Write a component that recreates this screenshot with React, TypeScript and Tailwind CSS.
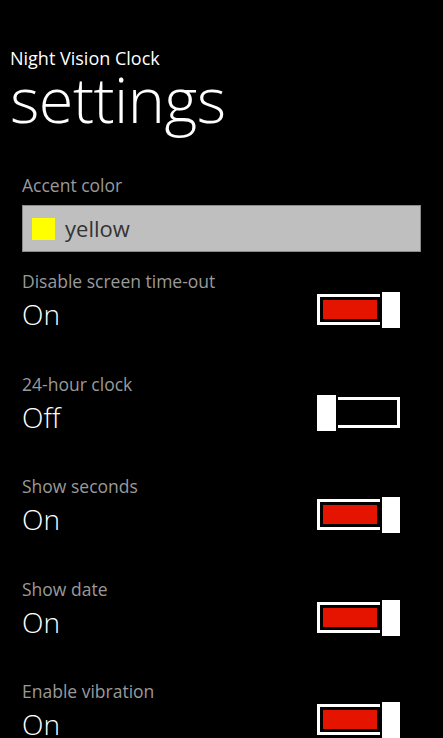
const font = { fontFamily: '"Open Sans", "Noto Sans", sans-serif' };

type Setting = { label: string; on: boolean };

const settings: Setting[] = [
  { label: "Disable screen time-out", on: true },
  { label: "24-hour clock", on: false },
  { label: "Show seconds", on: true },
  { label: "Show date", on: true },
  { label: "Enable vibration", on: true },
];

// WP7 style toggle: frame + fill, thumb lies over one end of the frame
function Toggle({ on }: { on: boolean }) {
  return (
    <div className="relative w-[83px] h-[36px]">
      <div className="absolute left-0 right-0 top-[2px] h-[31px] border-[3px] border-white p-[3px]">
        {on && <div className="w-[54px] h-full bg-[#e51400]" />}
      </div>
      {on ? (
        <div className="absolute -top-[2px] -right-[2px] w-[22px] h-[40px] bg-white border-2 border-black" />
      ) : (
        <div className="absolute -top-[2px] -left-[2px] w-[23px] h-[40px] bg-white border-2 border-black" />
      )}
    </div>
  );
}

export default function App() {
  return (
    <div
      className="w-[443px] h-[738px] bg-black text-white overflow-hidden"
      style={font}
    >
      {/* Header */}
      <div className="pl-[10px] pt-[46px]">
        <div className="text-[18px] font-medium leading-[24px]">
          Night Vision Clock
        </div>
        <div className="text-[63px] font-light leading-[58px] tracking-[-0.5px]">
          settings
        </div>
      </div>

      <div className="pl-[22px] pr-[43px] pt-[46px]">
        {/* Accent color */}
        <div className="text-[17.5px] leading-[22px] text-[#9a9a9a]">
          Accent color
        </div>
        <div className="mt-[9px] mr-[-21px] h-[47px] bg-[#bfbfbf] border border-[#8a8a8a] flex items-center pl-[9px]">
          <div className="w-[23px] h-[22px] bg-[#ffff00]" />
          <span className="ml-[10px] text-[22px] text-[#333333] leading-none -mt-[2px]">
            yellow
          </span>
        </div>

        {/* Toggles */}
        <div className="mt-[18px]">
          {settings.map((s) => (
            <div key={s.label} className="h-[102.5px] flex justify-between">
              <div>
                <div className="text-[17.5px] leading-[22px] text-[#9a9a9a]">
                  {s.label}
                </div>
                <div className="text-[28px] font-light leading-[36px] mt-[4px]">
                  {s.on ? "On" : "Off"}
                </div>
              </div>
              <div className="pt-[22px]">
                <Toggle on={s.on} />
              </div>
            </div>
          ))}
        </div>
      </div>
    </div>
  );
}
